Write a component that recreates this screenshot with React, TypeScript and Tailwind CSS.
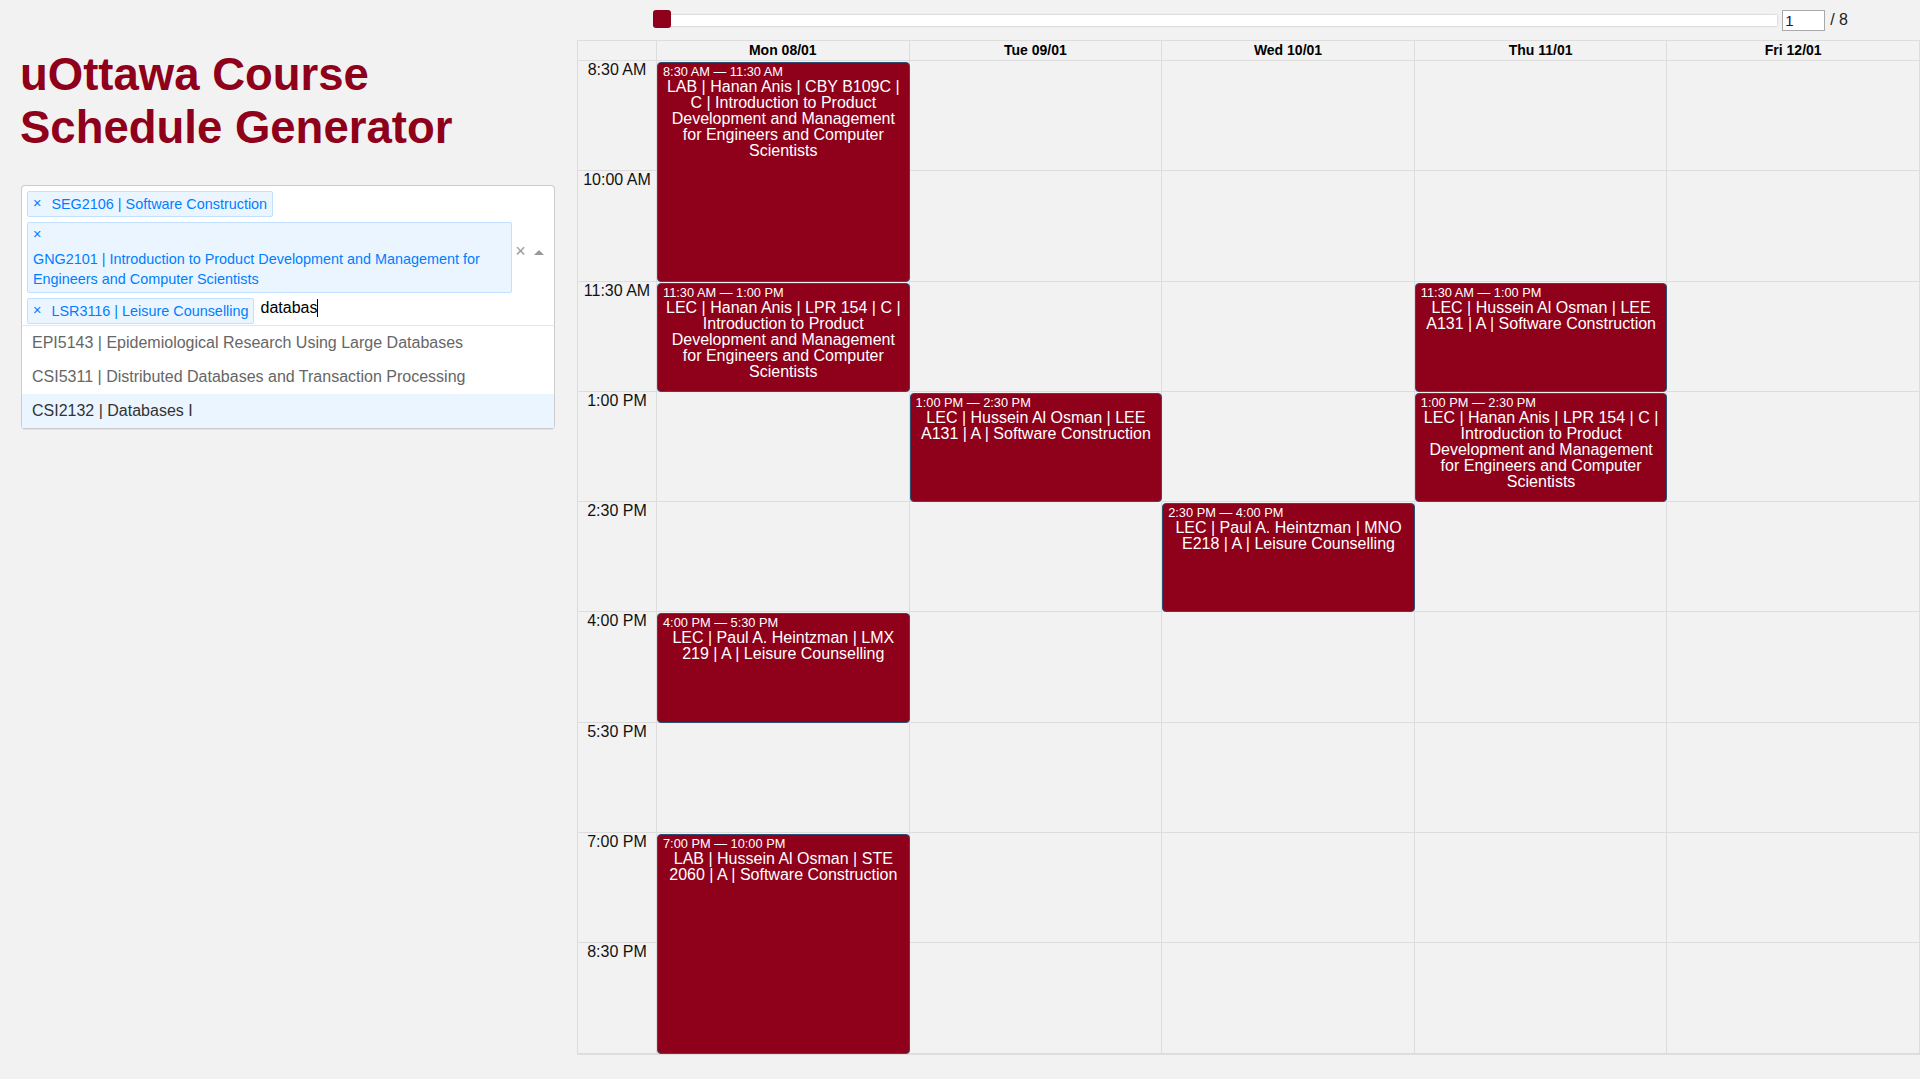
import React from 'react';

// grid placement lookups (full class names so Tailwind picks them up)
const colStart = ['col-start-1', 'col-start-2', 'col-start-3', 'col-start-4', 'col-start-5', 'col-start-6'];
const rowStart = [
  'row-start-1',
  'row-start-2',
  'row-start-3',
  'row-start-4',
  'row-start-5',
  'row-start-6',
  'row-start-7',
  'row-start-8',
  'row-start-9',
  'row-start-10',
];
const rowSpan = ['row-span-1', 'row-span-2'];

const times = ['8:30 AM', '10:00 AM', '11:30 AM', '1:00 PM', '2:30 PM', '4:00 PM', '5:30 PM', '7:00 PM', '8:30 PM'];
const days = ['Mon 08/01', 'Tue 09/01', 'Wed 10/01', 'Thu 11/01', 'Fri 12/01'];

const GNG = 'Introduction to Product Development and Management for Engineers and Computer Scientists';

// day: 0 = Mon, row: 0 = 8:30 AM, span in 1.5h slots
const events = [
  { day: 0, row: 0, span: 2, time: '8:30 AM — 11:30 AM', title: `LAB | Hanan Anis | CBY B109C | C | ${GNG}` },
  { day: 0, row: 2, span: 1, time: '11:30 AM — 1:00 PM', title: `LEC | Hanan Anis | LPR 154 | C | ${GNG}` },
  { day: 0, row: 5, span: 1, time: '4:00 PM — 5:30 PM', title: 'LEC | Paul A. Heintzman | LMX 219 | A | Leisure Counselling' },
  { day: 0, row: 7, span: 2, time: '7:00 PM — 10:00 PM', title: 'LAB | Hussein Al Osman | STE 2060 | A | Software Construction' },
  { day: 1, row: 3, span: 1, time: '1:00 PM — 2:30 PM', title: 'LEC | Hussein Al Osman | LEE A131 | A | Software Construction' },
  { day: 2, row: 4, span: 1, time: '2:30 PM — 4:00 PM', title: 'LEC | Paul A. Heintzman | MNO E218 | A | Leisure Counselling' },
  { day: 3, row: 2, span: 1, time: '11:30 AM — 1:00 PM', title: 'LEC | Hussein Al Osman | LEE A131 | A | Software Construction' },
  { day: 3, row: 3, span: 1, time: '1:00 PM — 2:30 PM', title: `LEC | Hanan Anis | LPR 154 | C | ${GNG}` },
];

const selected = [
  'SEG2106 | Software Construction',
  `GNG2101 | ${GNG}`,
  'LSR3116 | Leisure Counselling',
];

const options = [
  { label: 'EPI5143 | Epidemiological Research Using Large Databases', focused: false },
  { label: 'CSI5311 | Distributed Databases and Transaction Processing', focused: false },
  { label: 'CSI2132 | Databases I', focused: true },
];

function Tag({ label }: { label: string }) {
  return (
    <div className="ml-[5px] mt-[5px] min-w-0 rounded-[2px] border border-[#c2e0ff] bg-[#ebf5ff] text-[14.4px] leading-[1.4] text-[#007eff]">
      <span className="inline-block px-[5px] pt-px pb-[3px] align-top">×</span>
      <span className="inline-block px-[5px] py-[2px] align-top">{label}</span>
    </div>
  );
}

function CourseSelect() {
  return (
    <div className="mt-[31px] w-[534px]">
      <div className="flex rounded-t-[4px] border border-b-0 border-[#ccc] bg-white">
        <div className="flex min-w-0 flex-1 flex-wrap items-start pb-px">
          {selected.map((s) => (
            <Tag key={s} label={s} />
          ))}
          <div className="ml-[6px] mt-[4px] flex h-[22px] items-center text-[16px] text-black">
            databas
            <span className="h-[18px] w-px bg-black" />
          </div>
        </div>
        <div className="flex w-[17px] items-center justify-center pb-[8px] text-[18px] leading-none text-[#999]">×</div>
        <div className="flex w-[25px] items-center justify-center pr-[5px] pb-[6px]">
          <span className="h-0 w-0 border-x-[5px] border-b-[5px] border-x-transparent border-b-[#999]" />
        </div>
      </div>
      <div className="rounded-b-[4px] border border-[#ccc] border-t-[#e6e6e6] bg-white shadow-[0_1px_0_rgba(0,0,0,0.06)]">
        {options.map((o) => (
          <div
            key={o.label}
            className={
              o.focused
                ? 'bg-[#ebf5ff] px-[10px] py-[8px] text-[16px] leading-[18px] text-[#333]'
                : 'px-[10px] py-[8px] text-[16px] leading-[18px] text-[#666]'
            }
          >
            {o.label}
          </div>
        ))}
      </div>
    </div>
  );
}

function Pager() {
  return (
    <div className="flex h-[40px] items-center pl-[78px] pr-[72px]">
      <div className="relative h-[11px] flex-1 bg-white shadow-[0_0_2px_rgba(0,0,0,0.25)]">
        <div className="absolute -left-[2px] -top-[5px] h-[18px] w-[18px] rounded-[3px] bg-[#8f001a]" />
      </div>
      <div className="ml-[5px] h-[21px] w-[43px] border border-[#a9a9a9] bg-white pl-[2px] text-[15px] leading-[19px] text-[#10106a]">
        1
      </div>
      <span className="ml-[5px] text-[16px] text-[#222]">/ 8</span>
    </div>
  );
}

function Schedule() {
  return (
    <div className="grid w-full grid-cols-[79px_repeat(5,minmax(0,1fr))] grid-rows-[20px_repeat(9,110.3px)] border-b border-l border-t border-[#ddd]">
      {/* header row */}
      <div className={`${colStart[0]} ${rowStart[0]} border-b border-r border-[#ddd]`} />
      {days.map((d, i) => (
        <div
          key={d}
          className={`${colStart[i + 1]} ${rowStart[0]} flex items-center justify-center border-b border-r border-[#ddd] text-[14px] font-bold text-black`}
        >
          {d}
        </div>
      ))}

      {/* time slots */}
      {times.map((t, r) => (
        <React.Fragment key={t + r}>
          <div className={`${colStart[0]} ${rowStart[r + 1]} border-b border-r border-[#ddd] text-center text-[16px] leading-[18px] text-[#111]`}>
            {t}
          </div>
          {days.map((d, c) => (
            <div key={d} className={`${colStart[c + 1]} ${rowStart[r + 1]} border-b border-r border-[#ddd]`} />
          ))}
        </React.Fragment>
      ))}

      {/* events */}
      {events.map((e) => (
        <div
          key={e.time + e.day}
          className={`${colStart[e.day + 1]} ${rowStart[e.row + 1]} ${rowSpan[e.span - 1]} z-10 mt-px overflow-hidden rounded-[4px] border border-[#2d4f73] bg-[#8f001a] text-white`}
        >
          <div className="pl-[5px] pt-px text-[12.8px] leading-[15px]">{e.time}</div>
          <div className="px-[5px] text-center text-[16px] leading-[16px]">{e.title}</div>
        </div>
      ))}
    </div>
  );
}

export default function App() {
  return (
    <div className="flex h-[1079px] w-full overflow-hidden bg-[#f2f2f2] font-['Liberation_Sans',Arial,sans-serif]">
      <div className="w-[577px] shrink-0 pl-[21px] pt-[49px]">
        <h1 className="-ml-[1px] text-[45.5px] font-bold leading-[52.5px] text-[#8f001a]">
          uOttawa Course
          <br />
          Schedule Generator
        </h1>
        <CourseSelect />
      </div>
      <div className="flex min-w-0 flex-1 flex-col">
        <Pager />
        <Schedule />
      </div>
    </div>
  );
}
